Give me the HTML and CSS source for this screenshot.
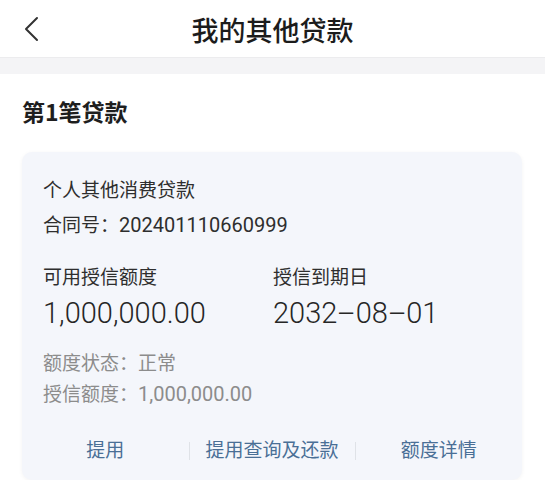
FILE: index.html
```html
<!DOCTYPE html>
<html lang="zh-CN">
<head>
<meta charset="utf-8">
<title>我的其他贷款</title>
<link rel="stylesheet" href="styles.css">
</head>
<body>
<header class="navbar">
  <div class="nav-left">
    <svg class="back" width="16" height="26" viewBox="0 0 16 26" aria-hidden="true">
      <polyline points="14,2 3,13 14,24" fill="none" stroke="#333" stroke-width="2" stroke-linecap="round" stroke-linejoin="round"/>
    </svg>
  </div>
  <h1 class="nav-title">我的其他贷款</h1>
  <div class="nav-right"></div>
</header>
<div class="band"></div>
<main class="content">
  <h2 class="section-title">第1笔贷款</h2>
  <section class="card">
    <div class="info">
      <div class="line">个人其他消费贷款</div>
      <div class="line">合同号：<span class="num">202401110660999</span></div>
      <div class="stats">
        <div class="stat">
          <div class="stat-label">可用授信额度</div>
          <div class="stat-value">1,000,000.00</div>
        </div>
        <div class="stat">
          <div class="stat-label">授信到期日</div>
          <div class="stat-value">2032<span class="dash">-</span>08<span class="dash">-</span>01</div>
        </div>
      </div>
      <div class="meta">
        <div class="meta-line">额度状态：正常</div>
        <div class="meta-line">授信额度：<span class="num">1,000,000.00</span></div>
      </div>
    </div>
    <div class="actions">
      <div class="action">提用</div>
      <div class="action">提用查询及还款</div>
      <div class="action">额度详情</div>
    </div>
  </section>
</main>
</body>
</html>
```

FILE: styles.css
```css
* { box-sizing: border-box; }
html, body { margin: 0; padding: 0; }
body {
  background: #ffffff;
  font-family: "Roboto", "Noto Sans CJK SC", sans-serif;
  color: #2b2b2b;
}
.navbar {
  height: 57px;
  display: grid;
  grid-template-columns: 1fr auto 1fr;
  align-items: center;
}
.nav-left { padding-left: 23px; display: flex; align-items: center; }
.back { display: block; }
.nav-title {
  margin: 0;
  font-family: "Noto Sans CJK SC", sans-serif;
  font-size: 27px;
  font-weight: 500;
  color: #1c1c1c;
  line-height: 36px;
  padding-top: 2px;
}
.band { height: 17px; background: #f4f4f6; border-top: 1px solid #ececee; }
.content { padding: 22px 23px 0 22px; }
.section-title {
  margin: 0;
  font-family: "Noto Sans CJK SC", sans-serif;
  font-size: 23px;
  font-weight: 700;
  line-height: 31px;
  color: #1e1e1e;
}
.card {
  margin-top: 25px;
  height: 328px;
  background: #f4f6fb;
  border-radius: 10px;
  box-shadow: 0 1px 4px rgba(0, 0, 0, 0.05);
  display: flex;
  flex-direction: column;
}
.info { padding: 22px 21px 0 21px; }
.line { font-size: 19px; line-height: 34px; color: #2e2e2e; }
.num { font-size: 20px; }
.stats {
  margin-top: 21px;
  display: grid;
  grid-template-columns: 230px 1fr;
}
.stat-label { font-size: 19px; line-height: 28px; color: #2e2e2e; }
.stat-value {
  margin-top: 1px;
  font-size: 29px;
  font-weight: 300;
  line-height: 40px;
  color: #262626;
}
.dash { display: inline-block; transform: scaleX(2.1); margin: 0 5px; }
.meta { margin-top: 15px; }
.meta-line { font-size: 19px; line-height: 31px; color: #8c8c8c; }
.actions {
  margin-top: 21px;
  display: grid;
  grid-template-columns: 1fr 1fr 1fr;
  align-items: center;
}
.action {
  position: relative;
  text-align: center;
  font-size: 19px;
  line-height: 40px;
  color: #4a6f96;
}
.action + .action::before {
  content: "";
  position: absolute;
  left: 0;
  top: 11px;
  height: 18px;
  border-left: 1px solid #dfe2e7;
}
```
